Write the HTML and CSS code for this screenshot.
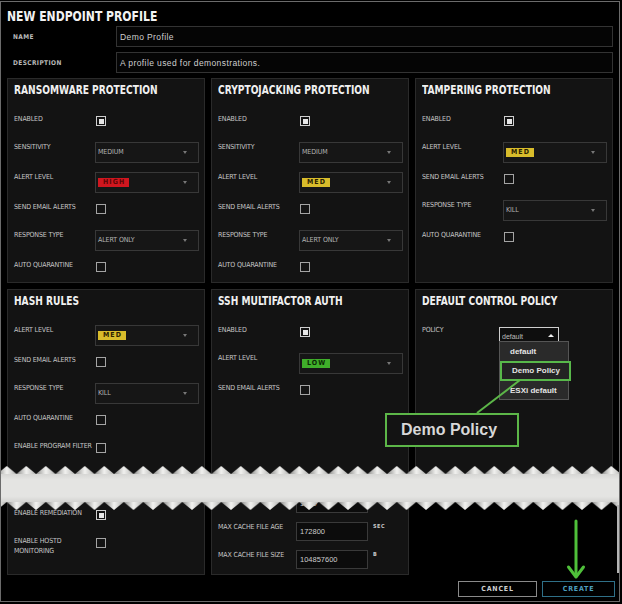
FILE: index.html
```html
<!DOCTYPE html>
<html lang="en">
<head>
    <meta charset="UTF-8">
    <title>New Endpoint Profile</title>
    <link rel="stylesheet" href="styles.css">
</head>
<body>
    <div class="window">
        <h1 class="title">NEW ENDPOINT PROFILE</h1>

        <div class="fields">
            <div class="field">
                <label>NAME</label>
                <div class="text-input">Demo Profile</div>
            </div>
            <div class="field">
                <label>DESCRIPTION</label>
                <div class="text-input">A profile used for demonstrations.</div>
            </div>
        </div>

        <div class="panels">
            <section class="panel">
                <h2>RANSOMWARE PROTECTION</h2>
                <div class="row row-check"><span class="lbl">ENABLED</span><span class="check on"></span></div>
                <div class="row row-select"><span class="lbl">SENSITIVITY</span><div class="select">MEDIUM</div></div>
                <div class="row row-select"><span class="lbl">ALERT LEVEL</span><div class="select"><span class="badge high">HIGH</span></div></div>
                <div class="row row-check"><span class="lbl">SEND EMAIL ALERTS</span><span class="check"></span></div>
                <div class="row row-select"><span class="lbl">RESPONSE TYPE</span><div class="select">ALERT ONLY</div></div>
                <div class="row row-check"><span class="lbl">AUTO QUARANTINE</span><span class="check"></span></div>
            </section>

            <section class="panel">
                <h2>CRYPTOJACKING PROTECTION</h2>
                <div class="row row-check"><span class="lbl">ENABLED</span><span class="check on"></span></div>
                <div class="row row-select"><span class="lbl">SENSITIVITY</span><div class="select">MEDIUM</div></div>
                <div class="row row-select"><span class="lbl">ALERT LEVEL</span><div class="select"><span class="badge med">MED</span></div></div>
                <div class="row row-check"><span class="lbl">SEND EMAIL ALERTS</span><span class="check"></span></div>
                <div class="row row-select"><span class="lbl">RESPONSE TYPE</span><div class="select">ALERT ONLY</div></div>
                <div class="row row-check"><span class="lbl">AUTO QUARANTINE</span><span class="check"></span></div>
            </section>

            <section class="panel">
                <h2>TAMPERING PROTECTION</h2>
                <div class="row row-check"><span class="lbl">ENABLED</span><span class="check on"></span></div>
                <div class="row row-select"><span class="lbl">ALERT LEVEL</span><div class="select"><span class="badge med">MED</span></div></div>
                <div class="row row-check"><span class="lbl">SEND EMAIL ALERTS</span><span class="check"></span></div>
                <div class="row row-select"><span class="lbl">RESPONSE TYPE</span><div class="select">KILL</div></div>
                <div class="row row-check"><span class="lbl">AUTO QUARANTINE</span><span class="check"></span></div>
            </section>

            <section class="panel">
                <h2>HASH RULES</h2>
                <div class="row row-select"><span class="lbl">ALERT LEVEL</span><div class="select"><span class="badge med">MED</span></div></div>
                <div class="row row-check"><span class="lbl">SEND EMAIL ALERTS</span><span class="check"></span></div>
                <div class="row row-select"><span class="lbl">RESPONSE TYPE</span><div class="select">KILL</div></div>
                <div class="row row-check"><span class="lbl">AUTO QUARANTINE</span><span class="check"></span></div>
                <div class="row row-check"><span class="lbl nowrap">ENABLE PROGRAM FILTER</span><span class="check"></span></div>
            </section>

            <section class="panel">
                <h2>SSH MULTIFACTOR AUTH</h2>
                <div class="row row-check"><span class="lbl">ENABLED</span><span class="check on"></span></div>
                <div class="row row-select"><span class="lbl">ALERT LEVEL</span><div class="select"><span class="badge low">LOW</span></div></div>
                <div class="row row-check"><span class="lbl">SEND EMAIL ALERTS</span><span class="check"></span></div>
            </section>

            <section class="panel">
                <h2>DEFAULT CONTROL POLICY</h2>
                <div class="row row-check">
                    <span class="lbl">POLICY</span>
                    <div class="policy-select">
                        <span class="policy-value">default</span>
                        <ul class="dropdown">
                            <li>default</li>
                            <li class="picked">Demo Policy</li>
                            <li>ESXi default</li>
                        </ul>
                    </div>
                </div>
            </section>
        </div>

        <div class="panels panels-tail">
            <section class="panel tail-left">
                <div class="row row-check"><span class="lbl">ENABLE REMEDIATION</span><span class="check on"></span></div>
                <div class="row row-check"><span class="lbl">ENABLE HOSTD<br>MONITORING</span><span class="check"></span></div>
            </section>
            <section class="panel tail-mid">
                <div class="row row-input"><span class="lbl">MAX CACHED FILES</span><div class="num-input">1000</div><span class="unit"></span></div>
                <div class="row row-input"><span class="lbl">MAX CACHE FILE AGE</span><div class="num-input">172800</div><span class="unit">SEC</span></div>
                <div class="row row-input"><span class="lbl">MAX CACHE FILE SIZE</span><div class="num-input">104857600</div><span class="unit">B</span></div>
            </section>
        </div>

        <div class="actions">
            <button class="btn">CANCEL</button>
            <button class="btn btn-create">CREATE</button>
        </div>

        <!-- torn page, callout line and arrow drawn over the form -->
        <svg class="overlay" width="622" height="604" viewBox="0 0 622 604">
            <defs>
                <linearGradient id="toothShade" x1="0" y1="0" x2="1" y2="0">
                    <stop offset="0" stop-color="#8d8d8b"/>
                    <stop offset="0.5" stop-color="#f2f2f0"/>
                    <stop offset="1" stop-color="#b4b4b2"/>
                </linearGradient>
                <pattern id="zigTop" x="-3" y="466" width="19.5" height="8" patternUnits="userSpaceOnUse">
                    <polygon points="0,8 9.75,0 19.5,8" fill="url(#toothShade)"/>
                </pattern>
                <pattern id="zigBottom" x="6.75" y="502" width="19.5" height="8" patternUnits="userSpaceOnUse">
                    <polygon points="0,0 9.75,8 19.5,0" fill="url(#toothShade)"/>
                </pattern>
                <linearGradient id="bandShade" x1="0" y1="0" x2="0" y2="1">
                    <stop offset="0" stop-color="#d6d6d4"/>
                    <stop offset="0.2" stop-color="#e4e4e2"/>
                    <stop offset="0.8" stop-color="#e4e4e2"/>
                    <stop offset="1" stop-color="#d4d4d2"/>
                </linearGradient>
            </defs>
            <rect x="0" y="466" width="622" height="8" fill="url(#zigTop)"/>
            <rect x="0" y="474" width="622" height="28" fill="url(#bandShade)"/>
            <rect x="0" y="502" width="622" height="8" fill="url(#zigBottom)"/>

            <line x1="477" y1="413" x2="520" y2="380" stroke="#5cb648" stroke-width="2"/>

            <g stroke="#4fc03a" stroke-width="3" fill="none" stroke-linecap="round">
                <line x1="576" y1="521" x2="576" y2="576"/>
                <polyline points="568.5,567 576,577 583.5,567" stroke-linejoin="round"/>
            </g>
        </svg>

        <div class="callout">Demo Policy</div>
        <div class="scroll-thumb"></div>
    </div>
</body>
</html>
```

FILE: styles.css
```css
* {
    box-sizing: border-box;
}

body {
    margin: 0;
    background: #000;
    color: #c8c8c8;
    font-family: "DejaVu Sans Condensed", "DejaVu Sans", sans-serif;
}

.window {
    position: relative;
    width: 620px;
    height: 601px;
    margin-top: 1px;
    border: 1px solid #6b6b6b;
    overflow: hidden;
}

/* the heading face is narrower than any installed one: squeeze it */
.title {
    margin: 0;
    padding: 6px 7px 0;
    font-size: 14px;
    line-height: 16px;
    font-weight: bold;
    color: #f2f2f2;
    transform: scaleX(0.86);
    transform-origin: 0 0;
}

/* name / description */
.fields {
    display: grid;
    gap: 5px;
    padding-top: 2px;
}

.field {
    display: grid;
    grid-template-columns: 103px 1fr;
    align-items: center;
    padding: 0 6px 0 12px;
}

.field label {
    font-size: 6.5px;
    font-weight: bold;
    letter-spacing: 0.4px;
    color: #b8b8b8;
}

.text-input {
    height: 21px;
    padding: 0 3px;
    display: flex;
    align-items: center;
    border: 1px solid #333;
    background: #050505;
    font-family: "Liberation Sans", sans-serif;
    font-size: 8.5px;
    letter-spacing: 0.4px;
    color: #cfcfcf;
}

/* panels */
.panels {
    display: grid;
    grid-template-columns: repeat(3, 198px);
    grid-template-rows: 205px 199px;
    gap: 6px;
    padding: 5px 0 0 6px;
}

.panels-tail {
    grid-template-rows: 85px;
    padding-top: 2px;
}

.panel {
    background: #131313;
    border: 1px solid #2a2a2a;
    padding: 3px 5px 0 6px;
}

.panel h2 {
    margin: 0 0 16.5px;
    font-size: 12.5px;
    line-height: 15px;
    font-weight: bold;
    color: #f0f0f0;
    white-space: nowrap;
    transform: scaleX(0.81);
    transform-origin: 0 0;
}

.row {
    display: grid;
    grid-template-columns: 81px 1fr;
    align-items: start;
}

.row-select {
    height: 30px;
}

.row-check {
    height: 28px;
}

.lbl {
    padding-top: 0.5px;
    font-size: 7px;
    line-height: 10px;
    letter-spacing: -0.15px;
    color: #c6c6c6;
}

.nowrap {
    white-space: nowrap;
}

.select {
    position: relative;
    height: 21px;
    padding-left: 2px;
    display: flex;
    align-items: center;
    border: 1px solid #383838;
    background: #161616;
    font-size: 7px;
    letter-spacing: -0.1px;
    color: #b4b4b4;
}

.select::after {
    content: "";
    position: absolute;
    right: 11px;
    top: 8px;
    border-left: 2.5px solid transparent;
    border-right: 2.5px solid transparent;
    border-top: 3px solid #777;
}

.check {
    width: 10px;
    height: 10px;
    margin: 2.5px 0 0 1px;
    border: 1px solid #a4a4a4;
}

.check.on {
    padding: 1.5px;
    border-color: #cfcfcf;
    background: #e6e6e6 content-box;
}

.badge {
    display: inline-block;
    height: 9px;
    line-height: 9px;
    padding: 0 4px 0 5px;
    font-size: 7px;
    font-weight: bold;
    letter-spacing: 1.1px;
}

.badge.high {
    background: #d0161f;
    color: #5c0606;
}

.badge.med {
    background: #d8bc2b;
    color: #2a2100;
}

.badge.low {
    background: #3fae2a;
    color: #0b2a05;
}

/* policy select with open list */
.policy-select {
    position: relative;
    width: 60px;
    height: 13.5px;
    margin: 2.5px 0 0 -4px;
    padding: 4px 2px 0;
    border: 1px solid #cfcfcf;
    border-bottom: none;
    background: #0e0e0e;
    font-family: "Liberation Sans", sans-serif;
    font-size: 7px;
    line-height: 9px;
    color: #bdbdbd;
}

.policy-value {
    display: block;
    height: 8.5px;
    overflow: hidden;
}

.policy-select::after {
    content: "";
    position: absolute;
    right: 4px;
    top: 6px;
    border-left: 3px solid transparent;
    border-right: 3px solid transparent;
    border-bottom: 3.5px solid #eee;
}

.dropdown {
    position: absolute;
    left: -1px;
    top: 100%;
    width: 70px;
    height: 59px;
    margin: 0;
    padding: 0;
    list-style: none;
    background: #2a2a2a;
    border: 1px solid #555;
}

.dropdown li {
    height: 19px;
    padding-left: 10px;
    font-size: 8px;
    font-weight: bold;
    line-height: 19px;
    color: #e4e4e4;
}

.dropdown li.picked {
    height: 20px;
    margin-right: -3px;
    line-height: 15px;
    border: 2px solid #58b84a;
    background: #232323;
}

/* tail of the page after the tear */
.tail-left {
    padding-top: 16.5px;
}

.tail-mid {
    padding-top: 2.5px;
}

.row-input {
    height: 28px;
    grid-template-columns: 78px 72px 1fr;
}

.num-input {
    height: 19.5px;
    padding-left: 3px;
    display: flex;
    align-items: center;
    border: 1px solid #3a3a3a;
    background: #0c0c0c;
    font-family: "Liberation Sans", sans-serif;
    font-size: 7.5px;
    color: #cccccc;
}

.unit {
    margin: 1px 0 0 5px;
    font-size: 5.5px;
    font-weight: bold;
    letter-spacing: 0.5px;
    color: #c8c8c8;
}

.actions {
    display: flex;
    justify-content: flex-end;
    gap: 5px;
    margin-top: 6px;
    padding-right: 4px;
}

.btn {
    height: 16px;
    width: 79px;
    padding: 0;
    background: #000;
    border: 1px solid #8a8a8a;
    color: #cfcfcf;
    font-family: inherit;
    font-size: 7px;
    font-weight: bold;
    letter-spacing: 0.8px;
}

.btn-create {
    width: 73px;
    border-color: #2f7088;
    color: #4e9fbf;
}

/* overlays */
.overlay {
    position: absolute;
    left: -1px;
    top: -2px;
}

.callout {
    position: absolute;
    left: 384px;
    top: 411px;
    width: 134px;
    height: 34px;
    padding-left: 14px;
    display: flex;
    align-items: center;
    background: #131313;
    border: 2px solid #5cb648;
    font-family: "Liberation Sans", sans-serif;
    font-size: 16px;
    font-weight: bold;
    color: #d8d8d8;
}

.scroll-thumb {
    position: absolute;
    right: -1px;
    top: 503px;
    width: 3px;
    height: 68px;
    background: #b5b5b5;
}
```
